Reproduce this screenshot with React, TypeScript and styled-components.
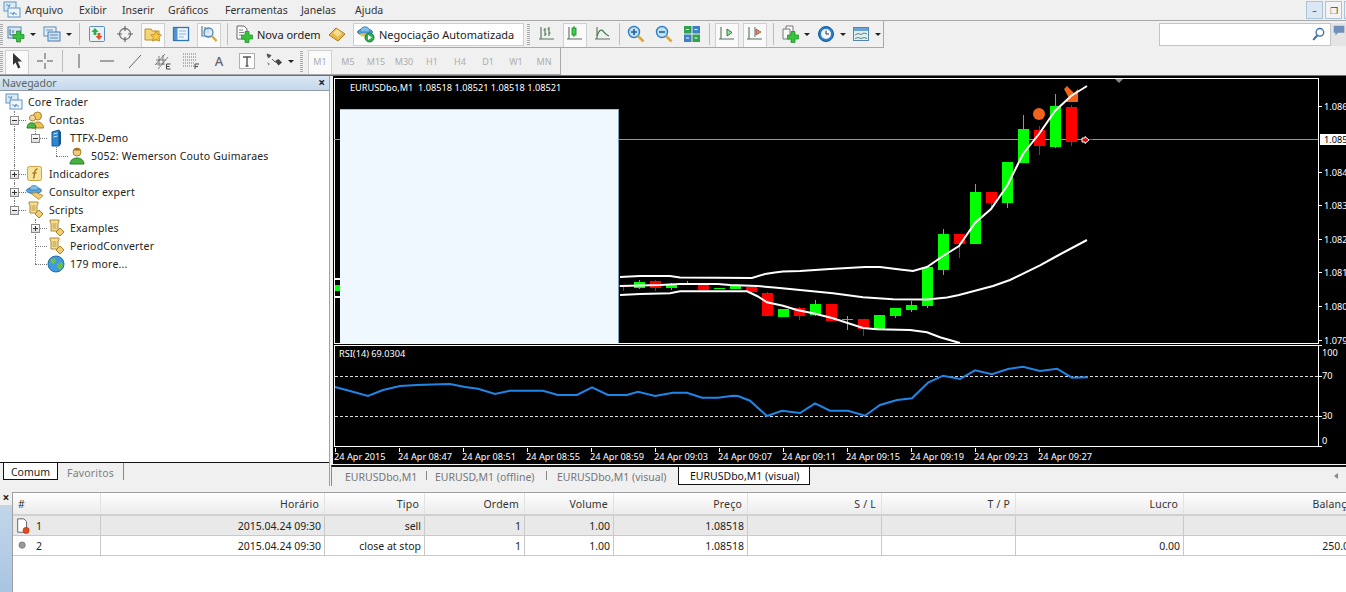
import React from "react";
import styled, { createGlobalStyle } from "styled-components";

const UI_FONT = `"Noto Sans", "Open Sans", sans-serif`;

const GlobalStyle = createGlobalStyle`
  html, body {
    margin: 0;
    padding: 0;
    overflow: hidden;
    background: #f0f0f0;
  }
  * { box-sizing: border-box; }
`;

/* ---------- icons ---------- */

const Ico = ({ s = 18, children }: { s?: number; children: React.ReactNode }) => (
  <svg width={s} height={s} viewBox="0 0 18 18" style={{ display: "block", flex: "none" }}>
    {children}
  </svg>
);

const Plus = ({ x = 12, y = 12 }: { x?: number; y?: number }) => (
  <path
    d={`M${x - 2} ${y - 5.5}h4v3.5h3.5v4H${x + 2}v3.5h-4V${y + 2}H${x - 5.5}v-4H${x - 2}z`}
    fill="#35c43a"
    stroke="#1c8a24"
    strokeWidth=".7"
  />
);

const NewChartIcon = () => (
  <Ico>
    <rect x="1" y="2" width="13" height="11" fill="#d8e8f6" stroke="#4f86b8" />
    <path d="M3 4v6M3 10h6M6 5v3" stroke="#3d6a99" fill="none" />
    <Plus x={11.5} y={11.5} />
  </Ico>
);
const ProfilesIcon = () => (
  <Ico>
    <rect x="1" y="2" width="12" height="9" fill="#e6f0fa" stroke="#5a8bbb" />
    <rect x="5" y="7" width="12" height="9" fill="#cfe1f3" stroke="#4a7cae" />
    <path d="M3 5h7M7 10h8M7 13h8" stroke="#5a8bbb" />
  </Ico>
);
const MarketIcon = () => (
  <Ico>
    <rect x="1.5" y="1.5" width="15" height="15" rx="1" fill="#e7f0f8" stroke="#5c8fbd" />
    <path d="M7 3l3.5 4H8.4v3H5.6V7H3.5z" fill="#2fae3a" />
    <path d="M11 15l-3.5-4h2.1V8h2.8v3h2.1z" fill="#e2522b" />
  </Ico>
);
const CrossIcon = () => (
  <Ico>
    <circle cx="9" cy="9" r="5.5" fill="none" stroke="#777" strokeWidth="1.3" />
    <path d="M9 1v5M9 12v5M1 9h5M12 9h5" stroke="#666" strokeWidth="1.2" />
  </Ico>
);
const NavigatorIcon = () => (
  <Ico>
    <path d="M1 4h6l1.5 2H15v9H1z" fill="#f5d77a" stroke="#b98e2c" />
    <path d="M12 6l1.7 3.4 3.8.5-2.700 2.600.7 3.700-3.500-1.800-3.400 1.800.7-3.700-2.800-2.600 3.800-.5z" fill="#f8c843" stroke="#b07f1c" strokeWidth=".7" />
  </Ico>
);
const TerminalIcon = () => (
  <Ico>
    <rect x="1.5" y="2.5" width="15" height="13" fill="#eef5fc" stroke="#2f76b5" strokeWidth="1.3" />
    <rect x="2" y="3" width="3.5" height="12" fill="#4f93cf" />
    <path d="M7 6h7M7 9h7M7 12h5" stroke="#8fb4d6" />
  </Ico>
);
const TesterIcon = () => (
  <Ico>
    <path d="M2 1v10h9M5 2v6M8 3v5" stroke="#5f7f8f" fill="none" strokeWidth="1.2" />
    <circle cx="8.5" cy="7.5" r="4.5" fill="#d6e8f6" fillOpacity=".7" stroke="#4c86b6" strokeWidth="1.3" />
    <path d="M12 11l4.5 5" stroke="#d6a73a" strokeWidth="2.4" />
  </Ico>
);
const OrderIcon = () => (
  <Ico>
    <path d="M2 1h7l3 3v10H2z" fill="#fff" stroke="#666" />
    <path d="M4 5h4M4 7.5h5M4 10h3" stroke="#888" />
    <Plus x={12} y={12} />
  </Ico>
);
const GoldIcon = () => (
  <Ico>
    <path d="M1 10l7-7 9 6-7 7z" fill="#e9b94a" stroke="#a97a1e" />
    <path d="M5 8l4-4 5 4-4 4z" fill="#f8dd90" />
  </Ico>
);
const HatIcon = () => (
  <Ico>
    <ellipse cx="8" cy="7" rx="7.5" ry="3" fill="#5ea6dc" stroke="#2d6fa5" />
    <path d="M3 7c0-7 10-7 10 0z" fill="#7cc0ea" stroke="#2d6fa5" strokeWidth=".7" />
    <path d="M3 8.5h10l-1 3H4z" fill="#e6c15a" />
    <circle cx="12.5" cy="12.5" r="4.5" fill="#2eae4d" stroke="#1b7a33" />
    <path d="M11 10l4 2.5-4 2.500z" fill="#fff" />
  </Ico>
);
const Axis = () => <path d="M3 2v12M1 14h15" stroke="#56705a" strokeWidth="1.1" fill="none" />;
const BarsIcon = () => (
  <Ico>
    <Axis />
    <path d="M7 3v8M5.5 5H7M7 9h1.5M11 2v9M9.5 4H11M11 8h1.5" stroke="#3f6b45" fill="none" />
  </Ico>
);
const CandlesIcon = () => (
  <Ico>
    <Axis />
    <path d="M8 1v11" stroke="#2f7a38" />
    <rect x="6" y="3" width="4" height="7" fill="#3bd24a" stroke="#227a2c" strokeWidth=".8" />
  </Ico>
);
const LineIcon = () => (
  <Ico>
    <Axis />
    <path d="M3 11c2-6 4-7 6-5s3 4 6 5" stroke="#3f7a45" fill="none" strokeWidth="1.2" />
  </Ico>
);
const Magnifier = ({ sign }: { sign: "+" | "-" }) => (
  <Ico>
    <circle cx="7" cy="7" r="5.5" fill="#bfe0f6" stroke="#2f7fc0" strokeWidth="1.4" />
    <path d={sign === "+" ? "M4 7h6M7 4v6" : "M4 7h6"} stroke="#1f5f9a" strokeWidth="1.6" />
    <path d="M11 11l5.5 5.5" stroke="#d9a93a" strokeWidth="2.6" />
  </Ico>
);
const TileIcon = () => (
  <Ico>
    <rect x="1" y="1" width="7.5" height="7.5" fill="#2fa34e" />
    <rect x="9.5" y="1" width="7.5" height="7.5" fill="#3f7fc4" />
    <rect x="1" y="9.5" width="7.5" height="7.5" fill="#3f7fc4" />
    <rect x="9.5" y="9.5" width="7.5" height="7.5" fill="#2fa34e" />
    <path d="M3 4.5h3M11.5 4.5h3M3 13h3M11.5 13h3" stroke="#fff" />
  </Ico>
);
const ScrollIcon = () => (
  <Ico>
    <Axis />
    <path d="M9 4l5 3.5-5 3.500z" fill="#9ae09f" stroke="#2f7a38" />
  </Ico>
);
const ShiftIcon = () => (
  <Ico>
    <Axis />
    <path d="M9 2v10" stroke="#56705a" />
    <path d="M15 7l-5-3v6z" fill="#d98a6a" stroke="#8a4a32" strokeWidth=".7" />
  </Ico>
);
const IndicatorIcon = () => (
  <Ico>
    <path d="M5 1h7v9H5z" fill="#fff" stroke="#777" />
    <path d="M2 4h7v10H2z" fill="#f7f7f7" stroke="#777" />
    <Plus x={12} y={12} />
  </Ico>
);
const ClockIcon = () => (
  <Ico>
    <circle cx="9" cy="9" r="7.5" fill="#2a7fcb" stroke="#14578f" />
    <circle cx="9" cy="9" r="5" fill="#f3f8fc" />
    <path d="M9 5.5V9h3" stroke="#333" fill="none" />
  </Ico>
);
const TemplateIcon = () => (
  <Ico>
    <rect x="1.5" y="2.5" width="15" height="13" fill="#e2eff0" stroke="#4e86b5" />
    <rect x="2" y="3" width="14" height="3" fill="#6ba4d4" />
    <path d="M3 10l3-1.5 3 1 3-1.5 3 1M3 13.5l3-1 3 1 3-1 3 1" stroke="#548a7a" fill="none" />
  </Ico>
);
const CursorIcon = () => (
  <Ico>
    <path d="M5 1l9 8.5H9.8l2.600 6-2.300 1-2.500-6L5 13z" fill="#333" />
  </Ico>
);
const ThinCrossIcon = () => (
  <Ico>
    <path d="M9 1v6M9 11v6M1 9h6M11 9h6" stroke="#555" />
  </Ico>
);
const VerticalIcon = () => (
  <Ico>
    <path d="M9 2v14" stroke="#555" />
  </Ico>
);
const HorizontalIcon = () => (
  <Ico>
    <path d="M2 9h14" stroke="#555" />
  </Ico>
);
const TrendIcon = () => (
  <Ico>
    <path d="M3 16L15 3" stroke="#666" />
  </Ico>
);
const ChannelIcon = () => (
  <Ico>
    <path d="M1 13L11 2M4 17L14 5M2 8h10M2 12h9M5 4v10M9 3v10" stroke="#666" fill="none" strokeWidth=".8" />
    <path d="M12.5 12h4M12.5 12v5h4M12.5 14.5h3" stroke="#444" fill="none" />
  </Ico>
);
const FiboIcon = () => (
  <Ico>
    <path d="M1 2h14M1 5h14M1 8h14M1 11h11M1 14h11" stroke="#777" strokeDasharray="1 1" />
    <path d="M13 12h4M13 12v5M13 14.5h3" stroke="#444" fill="none" />
  </Ico>
);
const TextBoxIcon = () => (
  <Ico>
    <rect x="1.5" y="1.5" width="15" height="15" fill="#fdfdfd" stroke="#666" strokeDasharray="1 1" />
    <path d="M5 5h8M9 5v9M7.5 14h3" stroke="#555" strokeWidth="1.4" fill="none" />
  </Ico>
);
const ArrowsIcon = () => (
  <Ico>
    <path d="M2 2l4 1.5-2.500 2.500zM7 7l3.500 3.500" fill="#555" stroke="#555" />
    <path d="M10 9l3.500-2 3.500 3.500-3.500 3z" fill="#444" />
    <path d="M2 10l3 2-1.500 1.500z" fill="#888" />
  </Ico>
);
const WindowChartIcon = () => (
  <Ico>
    <rect x="1" y="1" width="12" height="9" fill="#dcebf7" stroke="#5f95c4" />
    <rect x="5" y="7" width="12" height="9" fill="#eef5fb" stroke="#5f95c4" />
    <path d="M3 4h2l1 2 1-3M7 12h2l1 2 1-3 1 2h2" stroke="#477eb0" fill="none" strokeWidth=".8" />
  </Ico>
);
const UsersIcon = () => (
  <Ico>
    <circle cx="11.5" cy="5" r="4" fill="#f0c85e" stroke="#a8802a" />
    <path d="M6 17c0-8 11.500-8 11.500 0z" fill="#ecc04e" stroke="#a8802a" />
    <circle cx="6.5" cy="7" r="3" fill="#f4d7a0" stroke="#a8802a" />
    <path d="M1 17c0-7 9-7 9 0z" fill="#4fb648" stroke="#2c7f2a" />
  </Ico>
);
const ServerIcon = () => (
  <Ico>
    <path d="M5 3l7-2v16H5z" fill="#2f86d0" stroke="#1a5c98" />
    <path d="M12 1l2 2v12l-2 2z" fill="#16568f" />
    <path d="M6.5 5l4-1M6.5 8l4-1" stroke="#d5ecff" />
  </Ico>
);
const UserIcon = () => (
  <Ico>
    <circle cx="9" cy="5" r="4" fill="#f3c97d" stroke="#a8802a" />
    <path d="M6 3.5c1-3 5-3 6 0z" fill="#9c6a1f" />
    <path d="M2 17c0-8 14-8 14 0z" fill="#46b13f" stroke="#2b7d28" />
  </Ico>
);
const FunctionIcon = () => (
  <Ico>
    <rect x="1.5" y="1.5" width="14" height="14" rx="2" fill="#f6e39c" stroke="#c7a548" />
    <path d="M7 13c1.500 0 1-2 1.500-5S10 4 11.500 4M6.500 8h4" stroke="#a9791a" fill="none" strokeWidth="1.4" />
  </Ico>
);
const ExpertIcon = () => (
  <Ico>
    <ellipse cx="8" cy="7.5" rx="7.5" ry="3" fill="#5ea6dc" stroke="#2d6fa5" />
    <path d="M3.5 7c0-6 9-6 9 0z" fill="#7cc0ea" stroke="#2d6fa5" strokeWidth=".7" />
    <path d="M5 10.5l5-1 7 3-4 4z" fill="#efcf71" stroke="#a8802a" strokeWidth=".8" />
  </Ico>
);
const ScriptIcon = () => (
  <Ico>
    <path d="M3 1h9v2l-1 1v8H4V4L3 3z" fill="#f4df98" stroke="#ab8a35" />
    <path d="M5.5 5h4M5.5 7h4M5.5 9h4" stroke="#b99a45" />
    <path d="M13 9l4 4-4 4-4-4z" fill="#efcf71" stroke="#a8802a" />
  </Ico>
);
const GlobeIcon = () => (
  <Ico>
    <circle cx="9" cy="9" r="8" fill="#3f9be0" stroke="#1f6aaa" />
    <path d="M3 5l4-2 2 2-1 3-3 1zM10 9l5-2 1 4-3 4-2-2z" fill="#6cc04a" />
  </Ico>
);
const OpenOrderIcon = () => (
  <Ico s={16}>
    <path d="M3 1h7l3 3v12H3z" fill="#fff" stroke="#555" />
    <circle cx="12.5" cy="14" r="3.5" fill="#e3491e" stroke="#a62f10" strokeWidth=".6" />
  </Ico>
);
const ClosedOrderIcon = () => (
  <Ico s={16}>
    <circle cx="8" cy="8" r="3.5" fill="#9a9a9a" stroke="#777" />
  </Ico>
);
const SearchIcon = () => (
  <Ico s={16}>
    <circle cx="10" cy="6" r="4.3" fill="#fff" stroke="#3c6ea5" strokeWidth="1.5" />
    <path d="M7 9.5L2.5 14.5" stroke="#3c6ea5" strokeWidth="2.3" />
  </Ico>
);
const FeedbackIcon = () => (
  <Ico s={16}>
    <path d="M3 3h12v8H8l-3 3v-3H3z" fill="#6f8fbe" />
  </Ico>
);

/* ---------- top bars ---------- */

const Shell = styled.div`
  width: 1346px;
  height: 592px;
  display: flex;
  flex-direction: column;
  background: #f0f0f0;
  font-family: ${UI_FONT};
  font-size: 10.5px;
  color: #222;
  overflow: hidden;
`;

const MenuBar = styled.div`
  height: 21px;
  flex: none;
  display: flex;
  align-items: center;
  padding: 0 0 1px 3px;
  border-bottom: 1px solid #a8a8a8;
`;

const MenuList = styled.nav`
  display: flex;
  margin-left: 4px;
`;

const MenuItem = styled.span<{ $w: number }>`
  width: ${(p) => p.$w}px;
  font-size: 10.5px;
  color: #333;
`;

const WindowButtons = styled.div`
  margin-left: auto;
  display: flex;
  gap: 2px;
  width: 40px;
  overflow: hidden;
  align-self: flex-start;
  padding-top: 1px;
`;

const WindowButton = styled.div<{ $on?: boolean }>`
  width: 17px;
  height: 18px;
  flex: none;
  border: 1px solid #a9c3db;
  background: ${(p) => (p.$on ? "#dbe8f4" : "#f3f3f3")};
  display: flex;
  align-items: center;
  justify-content: center;
  color: #444;
  font-size: 9px;
  line-height: 1;
`;

const ToolRow = styled.div<{ $h: number }>`
  height: ${(p) => p.$h}px;
  flex: none;
  display: flex;
  align-items: flex-start;
`;

const Toolbar = styled.div`
  height: 100%;
  display: flex;
  align-items: center;
  border-right: 1px solid #a8a8a8;
  border-bottom: 1px solid #a8a8a8;
`;

const ToolButton = styled.div<{ $w?: number; $active?: boolean }>`
  width: ${(p) => p.$w ?? 28}px;
  height: 25px;
  flex: none;
  display: flex;
  align-items: center;
  justify-content: center;
  gap: 5px;
  position: relative;
  &::before {
    content: "";
    display: ${(p) => (p.$active ? "block" : "none")};
    position: absolute;
    left: 2px;
    right: 2px;
    top: 1px;
    bottom: 0;
    border: 1px solid #d0d0d0;
    border-bottom: 0;
    background: #fafafa;
  }
  & > * {
    position: relative;
  }
`;

const Caret = styled.i`
  width: 0;
  height: 0;
  border-left: 3px solid transparent;
  border-right: 3px solid transparent;
  border-top: 3px solid #222;
  flex: none;
`;

const Separator = styled.div<{ $w: number }>`
  width: ${(p) => p.$w}px;
  height: 22px;
  flex: none;
  display: flex;
  justify-content: center;
  &::after {
    content: "";
    width: 1px;
    background: #bdbdbd;
  }
`;

const Grip = styled.div<{ $w: number }>`
  width: ${(p) => p.$w}px;
  height: 21px;
  flex: none;
  display: flex;
  justify-content: center;
  &::after {
    content: "";
    width: 3px;
    background: repeating-linear-gradient(to bottom, #aaa 0 1px, transparent 1px 2px);
  }
`;

const LabelButton = styled.div`
  width: 92px;
  height: 25px;
  flex: none;
  display: flex;
  align-items: center;
  gap: 4px;
  padding-left: 4px;
  font-size: 11px;
  color: #222;
  white-space: nowrap;
`;

const AutoTrade = styled.div`
  width: 171px;
  height: 23px;
  margin-left: 2px;
  flex: none;
  display: flex;
  align-items: center;
  gap: 4px;
  padding-left: 3px;
  background: #fff;
  border: 1px solid #cfcfcf;
  font-size: 11px;
  white-space: nowrap;
`;

const PeriodButton = styled(ToolButton)`
  color: #adadad;
  font-size: 9px;
`;

const LetterTool = styled.span`
  font-size: 13px;
  color: #666;
  font-weight: 500;
`;

const ToolbarEnd = styled.div`
  width: 2px;
  flex: none;
`;

const SearchBox = styled.div`
  margin-left: auto;
  margin-top: 2px;
  width: 172px;
  height: 23px;
  flex: none;
  background: #fff;
  border: 1px solid #c4c4c4;
  display: flex;
  align-items: center;
  justify-content: flex-end;
  padding-right: 3px;
`;

const FeedbackSlot = styled.div`
  width: 15px;
  margin-top: 2px;
  height: 23px;
  flex: none;
  background: #e4e4e4;
  overflow: hidden;
`;

/* ---------- navigator ---------- */

const Workspace = styled.div`
  height: 411px;
  flex: none;
  display: flex;
  border-top: 1px solid #6e6e6e;
`;

const NavPanel = styled.aside`
  width: 330px;
  flex: none;
  display: flex;
  flex-direction: column;
  border-right: 1px solid #a0a0a0;
`;

const NavHeader = styled.header`
  height: 15px;
  flex: none;
  padding-left: 2px;
  padding-right: 4px;
  display: flex;
  align-items: center;
  justify-content: space-between;
  background: linear-gradient(#dbe7f3, #c5d8eb);
  border-bottom: 1px solid #8f9aa6;
  color: #566;
  font-size: 10.5px;
`;

const CloseMark = styled.span`
  font-size: 12px;
  font-weight: 700;
  line-height: 1;
  color: #222;
`;

const TreeBox = styled.div`
  height: 372px;
  flex: none;
  background: #fff;
  padding-top: 2px;
  border-bottom: 1px solid #111;
`;

const TreeRow = styled.div<{ $indent: number }>`
  height: 18px;
  display: flex;
  align-items: center;
  padding-left: ${(p) => p.$indent}px;
  position: relative;
  font-size: 10.5px;
  letter-spacing: 0.2px;
  color: #222;
  white-space: nowrap;
`;

const TreeLabel = styled.span`
  margin-left: 5px;
`;

const Guide = styled.i<{ $x: number; $half?: boolean }>`
  position: absolute;
  left: ${(p) => p.$x}px;
  top: 0;
  height: ${(p) => (p.$half ? "9px" : "18px")};
  border-left: 1px dotted #777;
`;

const BranchSlot = styled.span`
  width: 16px;
  height: 18px;
  flex: none;
  display: flex;
  align-items: center;
  position: relative;
  &::before {
    content: "";
    position: absolute;
    left: 4px;
    right: 0;
    top: 9px;
    border-top: 1px dotted #777;
  }
`;

const Expander = styled.span`
  width: 9px;
  height: 9px;
  position: relative;
  background: linear-gradient(#fff, #ddd);
  border: 1px solid #8a8a8a;
  font-size: 0;
  &::before {
    content: "";
    position: absolute;
    left: 1px;
    right: 1px;
    top: 3px;
    height: 1px;
    background: #333;
  }
  &[data-closed="true"]::after {
    content: "";
    position: absolute;
    top: 1px;
    bottom: 1px;
    left: 3px;
    width: 1px;
    background: #333;
  }
`;

const NavTabs = styled.div`
  flex: 1;
  display: flex;
  align-items: flex-start;
  padding-left: 3px;
`;

const ActiveNavTab = styled.div`
  width: 55px;
  height: 17px;
  padding-top: 1px;
  background: #fff;
  border: 1px solid #111;
  border-top: 0;
  display: flex;
  align-items: center;
  justify-content: center;
  font-size: 10.5px;
`;

const NavTab = styled.div`
  margin-left: 9px;
  width: 57px;
  height: 17px;
  padding-top: 2px;
  display: flex;
  align-items: center;
  border-right: 1px solid #888;
  color: #808080;
  font-size: 10.5px;
  letter-spacing: 0.2px;
`;

/* ---------- charts ---------- */

const ChartColumn = styled.div`
  flex: 1;
  min-width: 0;
  display: flex;
  flex-direction: column;
  padding-left: 3px;
`;

const ChartArea = styled.div`
  height: 388px;
  flex: none;
  background: #000;
  color: #fff;
  font-size: 9.2px;
  padding-top: 2px;
  overflow: hidden;
`;

const Pane = styled.div<{ $h: number }>`
  height: ${(p) => p.$h}px;
  position: relative;
  & > svg {
    display: block;
  }
  text {
    font-family: ${UI_FONT};
    font-size: 9.2px;
    fill: #fff;
  }
`;

const PaneGap = styled.div`
  height: 1px;
`;

const Legend = styled.div<{ $x: number; $y: number }>`
  position: absolute;
  left: ${(p) => p.$x}px;
  top: ${(p) => p.$y}px;
  font-size: 9.2px;
  line-height: 12px;
  color: #fff;
  white-space: pre;
`;

const Blank = styled.div`
  position: absolute;
  left: 7px;
  top: 31px;
  width: 279px;
  bottom: 1px;
  background: #f0f8ff;
  border-right: 1px solid #7f9db5;
  border-top: 1px solid #a9c0d2;
`;

const TimeAxis = styled.div`
  display: flex;
  padding-left: 1px;
  height: 16px;
`;

const TimeLabel = styled.span`
  width: 64px;
  flex: none;
  position: relative;
  padding-top: 3px;
  line-height: 12px;
  white-space: nowrap;
  &::before {
    content: "";
    position: absolute;
    left: 1px;
    top: 0;
    height: 4px;
    border-left: 1px solid #fff;
  }
`;

const TabBar = styled.div`
  flex: 1;
  margin-left: -2px;
  margin-top: 1px;
  display: flex;
  align-items: stretch;
  padding-bottom: 1px;
  border-top: 2px solid #111;
  border-left: 1px solid #8a8a8a;
  position: relative;
`;

const ChartTab = styled.div<{ $w: number; $pad: number; $active?: boolean; $sep?: boolean }>`
  width: ${(p) => p.$w}px;
  flex: none;
  display: flex;
  align-items: center;
  padding: 1px 0 0 ${(p) => p.$pad}px;
  font-size: 10.5px;
  white-space: nowrap;
  color: ${(p) => (p.$active ? "#111" : "#777")};
  background: ${(p) => (p.$active ? "#fff" : "transparent")};
  border: ${(p) => (p.$active ? "1px solid #111" : "0")};
  border-top: 0;
  position: relative;
  &::after {
    content: "";
    display: ${(p) => (p.$sep ? "block" : "none")};
    position: absolute;
    right: 0;
    top: 4px;
    bottom: 5px;
    border-right: 1px solid #888;
  }
`;

const TabScroll = styled.div`
  margin-left: auto;
  width: 20px;
  display: flex;
  align-items: center;
  justify-content: center;
  &::before {
    content: "";
    border-top: 3px solid transparent;
    border-bottom: 3px solid transparent;
    border-right: 4px solid #888;
  }
`;

/* ---------- terminal ---------- */

const Terminal = styled.section`
  flex: 1;
  display: flex;
  min-height: 0;
  padding-top: 6px;
`;

const TerminalSide = styled.div`
  width: 12px;
  flex: none;
  display: flex;
  flex-direction: column;
  align-items: center;
`;

const SideStrip = styled.div`
  flex: 1;
  margin-top: 1px;
  width: 100%;
  background: linear-gradient(#c3d6ea, #a9c5e3);
`;

const Table = styled.div`
  flex: 1;
  min-width: 0;
  background: #fff;
  border-top: 1px solid #a0a0a0;
  border-left: 1px solid #a0a0a0;
  overflow: hidden;
`;

const COLUMNS = "88px 224px 100px 100px 89px 134px 134px 134px 168px 175px";

const HeadRow = styled.div`
  display: grid;
  grid-template-columns: ${COLUMNS};
  height: 23px;
  background: linear-gradient(#fff, #f3f3f3 60%, #ececec);
  border-bottom: 2px solid #d0d0d0;
`;

const HeadCell = styled.div<{ $left?: boolean }>`
  display: flex;
  align-items: center;
  justify-content: ${(p) => (p.$left ? "flex-start" : "flex-end")};
  padding: 0 5px;
  border-right: 1px solid #e2e2e2;
  font-size: 10.5px;
  letter-spacing: 0.2px;
  color: #333;
`;

const DataRow = styled.div<{ $shade?: boolean }>`
  display: grid;
  grid-template-columns: ${COLUMNS};
  height: 20px;
  background: ${(p) => (p.$shade ? "#e9e9e9" : "#fff")};
  border-bottom: 1px solid #c9c9c9;
`;

const DataCell = styled.div`
  display: flex;
  align-items: center;
  justify-content: flex-end;
  padding: 0 3px;
  border-right: 1px solid #c9c9c9;
  font-size: 10.5px;
  color: #222;
  white-space: nowrap;
`;

const IdCell = styled(DataCell)`
  justify-content: flex-start;
  gap: 5px;
  padding-left: 2px;
`;

/* ---------- chart data ---------- */

// x, body top, body bottom, wick top, wick bottom, is up
type Candle = [number, number, number, number, number, boolean];

const CANDLES: Candle[] = [
  [335, 285, 291, 285, 291, true],
  [623, 285, 287, 285, 291, false],
  [639, 282, 288, 280, 289, true],
  [655, 281, 288, 280, 291, false],
  [671, 285, 288, 283, 290, true],
  [687, 283, 284, 281, 285, true],
  [703, 285, 290, 284, 290, false],
  [719, 288, 289, 288, 289, true],
  [735, 286, 289, 285, 289, true],
  [751, 287, 292, 286, 294, false],
  [767, 293, 316, 292, 316, false],
  [783, 309, 317, 309, 317, true],
  [799, 308, 316, 307, 320, false],
  [815, 304, 315, 300, 316, true],
  [831, 304, 321, 304, 321, false],
  [847, 319, 320, 316, 330, true],
  [863, 319, 329, 319, 336, false],
  [879, 315, 329, 315, 330, true],
  [895, 308, 316, 308, 318, true],
  [911, 305, 310, 301, 312, true],
  [927, 267, 306, 267, 308, true],
  [943, 234, 270, 229, 275, true],
  [959, 234, 244, 234, 258, false],
  [975, 192, 244, 184, 244, true],
  [991, 192, 203, 192, 207, false],
  [1007, 162, 203, 162, 208, true],
  [1023, 129, 163, 115, 163, true],
  [1039, 130, 146, 126, 155, false],
  [1055, 106, 147, 94, 148, true],
  [1071, 107, 142, 105, 146, false],
];

const UPPER =
  "620,277 640,276 670,276 680,277.5 752,278 765,274 775,272.5 783,271.5 800,271 830,269 865,267 880,267 900,269.5 913,271 927,267 943,256 959,246 975,223 991,209 1007,186 1023,154 1039,134 1055,111 1071,96 1087,86";
const MIDDLE =
  "620,286 660,285 680,284 718,284 730,285 757,286 777,287.7 800,290 833,293.3 863,297.3 893,299.3 927,299.5 947,297.5 959,295 993,286 1010,280 1040,265.3 1057,256 1087,240";
const LOWER =
  "620,295 640,294 670,293.3 680,291.3 747,291.3 757,296 767,302.3 783,305.7 797,310 813,313.3 833,318.3 863,328 877,329.3 910,330 927,332.3 940,337.3 960,343";

const RSI = [
  [335, 387], [350, 391], [368, 396], [383, 390], [400, 386], [417, 385], [440, 384.3], [450, 384], [465, 387],
  [478, 388.7], [495, 394], [510, 390.7], [543, 390.7], [558, 395], [577, 395], [592, 387.3], [608, 395],
  [627, 395], [638, 391.7], [655, 396], [673, 392.7], [687, 392.7], [702, 397.7], [718, 397.7], [733, 395.7],
  [738, 396], [750, 400.7], [767, 416], [782, 410.7], [800, 413], [815, 403.3], [830, 410.7], [848, 410.7],
  [865, 415.7], [880, 405], [897, 400], [912, 398.3], [928, 382.7], [943, 375.7], [960, 379], [975, 370.3],
  [992, 374.3], [1008, 369], [1023, 366.7], [1040, 371], [1057, 368.7], [1072, 377.7], [1088, 377.3],
]
  .map((p) => p.join(","))
  .join(" ");

const PRICES: [string, number][] = [
  ["1.08600", 106],
  ["1.08400", 172],
  ["1.08300", 205],
  ["1.08200", 239],
  ["1.08100", 272],
  ["1.08000", 306],
  ["1.07900", 340],
];

const TIMES = [
  "24 Apr 2015", "24 Apr 08:47", "24 Apr 08:51", "24 Apr 08:55", "24 Apr 08:59", "24 Apr 09:03",
  "24 Apr 09:07", "24 Apr 09:11", "24 Apr 09:15", "24 Apr 09:19", "24 Apr 09:23", "24 Apr 09:27",
];

const MainChart = () => (
  <svg width={1013} height={267} viewBox="333 78 1013 267">
    <rect x="334.5" y="78.5" width="984" height="265" fill="none" stroke="#fff" />
    <path d="M334 139.5H1318" stroke="#999" />
    {CANDLES.map(([x, top, bottom, wt, wb, up]) => {
      const color = up ? "#00ff00" : "#ff0000";
      const left = x === 335 ? 335 : x - 5;
      return (
        <g key={x}>
          <path d={`M${x + 0.5} ${wt}V${wb}`} stroke={color} />
          <rect x={left} y={top} width={x === 335 ? 5 : 11} height={bottom - top} fill={color} />
        </g>
      );
    })}
    <path d="M1087 139.5h6" stroke="#00c000" />
    <circle cx="1039" cy="114" r="6" fill="#f2641c" />
    <path d="M1064 89l3-3 7 7 4-4v13h-13l4-4z" fill="#f2641c" />
    <polyline points="335,279 341,279" stroke="#fff" strokeWidth="2" fill="none" />
    <polyline points="335,297 341,297" stroke="#fff" strokeWidth="2" fill="none" />
    <polyline points={UPPER} stroke="#fff" strokeWidth="2" fill="none" />
    <polyline points={MIDDLE} stroke="#fff" strokeWidth="2" fill="none" />
    <polyline points={LOWER} stroke="#fff" strokeWidth="2" fill="none" />
    <path d="M1082 138h3v-1.500l4 3.500-4 3.500V142h-3z" fill="#e00010" stroke="#fff" />
    <path d="M1115 79h8l-4 4z" fill="#888" />
    {PRICES.map(([p, y]) => (
      <g key={p}>
        <path d={`M1319 ${y + 0.5}h3`} stroke="#fff" />
        <text x="1324" y={y + 3.5}>
          {p}
        </text>
      </g>
    ))}
    <rect x="1320" y="134" width="26" height="11" fill="#fff" />
    <text x="1324" y="143" style={{ fill: "#000" }}>
      1.08518
    </text>
  </svg>
);

const RsiChart = () => (
  <svg width={1013} height={103} viewBox="333 345 1013 103">
    <rect x="334.5" y="345.5" width="984" height="101" fill="none" stroke="#fff" />
    <path d="M335 376.5H1318M335 416.5H1318" stroke="#ddd" strokeDasharray="3 2" />
    <polyline points={RSI} stroke="#1f86e8" strokeWidth="2" fill="none" />
    <path d="M1319 345.5h3M1319 376.5h3M1319 416.5h3M1319 446.5h3" stroke="#fff" />
    <text x="1322" y="356">100</text>
    <text x="1322" y="379">70</text>
    <text x="1322" y="419">30</text>
    <text x="1322" y="444">0</text>
  </svg>
);

/* ---------- page ---------- */

const MENU: [string, number][] = [
  ["Arquivo", 54],
  ["Exibir", 43],
  ["Inserir", 46],
  ["Gráficos", 57],
  ["Ferramentas", 76],
  ["Janelas", 54],
  ["Ajuda", 50],
];

const TIMEFRAMES = ["M1", "M5", "M15", "M30", "H1", "H4", "D1", "W1", "MN"];

const HEAD = ["Horário", "Tipo", "Ordem", "Volume", "Preço", "S / L", "T / P", "Lucro", "Balanço"];

const ROWS = [
  { id: 1, icon: <OpenOrderIcon />, cells: ["2015.04.24 09:30", "sell", "1", "1.00", "1.08518", "", "", "", ""] },
  { id: 2, icon: <ClosedOrderIcon />, cells: ["2015.04.24 09:30", "close at stop", "1", "1.00", "1.08518", "", "", "0.00", "250.00"] },
];

export default function App() {
  return (
    <Shell>
      <GlobalStyle />
      <MenuBar>
        <WindowChartIcon />
        <MenuList>
          {MENU.map(([m, w]) => (
            <MenuItem key={m} $w={w}>
              {m}
            </MenuItem>
          ))}
        </MenuList>
        <WindowButtons>
          <WindowButton $on>–</WindowButton>
          <WindowButton>❐</WindowButton>
          <WindowButton>×</WindowButton>
        </WindowButtons>
      </MenuBar>

      <ToolRow $h={27}>
        <Toolbar>
          <Grip $w={3} />
          <ToolButton $w={36}><NewChartIcon /><Caret /></ToolButton>
          <ToolButton $w={36}><ProfilesIcon /><Caret /></ToolButton>
          <Separator $w={8} />
          <ToolButton><MarketIcon /></ToolButton>
          <ToolButton><CrossIcon /></ToolButton>
          <ToolButton $active><NavigatorIcon /></ToolButton>
          <ToolButton><TerminalIcon /></ToolButton>
          <ToolButton $active><TesterIcon /></ToolButton>
          <Separator $w={8} />
          <LabelButton><OrderIcon />Nova ordem</LabelButton>
          <ToolButton><GoldIcon /></ToolButton>
          <AutoTrade><HatIcon />Negociação Automatizada</AutoTrade>
          <Grip $w={9} />
          <ToolButton><BarsIcon /></ToolButton>
          <ToolButton $active><CandlesIcon /></ToolButton>
          <ToolButton><LineIcon /></ToolButton>
          <Separator $w={5} />
          <ToolButton><Magnifier sign="+" /></ToolButton>
          <ToolButton><Magnifier sign="-" /></ToolButton>
          <ToolButton><TileIcon /></ToolButton>
          <Separator $w={7} />
          <ToolButton $active><ScrollIcon /></ToolButton>
          <ToolButton $active><ShiftIcon /></ToolButton>
          <Separator $w={8} />
          <ToolButton $w={36}><IndicatorIcon /><Caret /></ToolButton>
          <ToolButton $w={36}><ClockIcon /><Caret /></ToolButton>
          <ToolButton $w={34}><TemplateIcon /><Caret /></ToolButton>
        </Toolbar>
        <SearchBox><SearchIcon /></SearchBox>
        <FeedbackSlot><FeedbackIcon /></FeedbackSlot>
      </ToolRow>

      <ToolRow $h={27}>
        <Toolbar>
          <Grip $w={3} />
          <ToolButton $active><CursorIcon /></ToolButton>
          <ToolButton><ThinCrossIcon /></ToolButton>
          <Separator $w={6} />
          <ToolButton><VerticalIcon /></ToolButton>
          <ToolButton><HorizontalIcon /></ToolButton>
          <ToolButton><TrendIcon /></ToolButton>
          <ToolButton><ChannelIcon /></ToolButton>
          <ToolButton><FiboIcon /></ToolButton>
          <ToolButton><LetterTool>A</LetterTool></ToolButton>
          <ToolButton><TextBoxIcon /></ToolButton>
          <ToolButton $w={36}><ArrowsIcon /><Caret /></ToolButton>
          <Grip $w={9} />
          {TIMEFRAMES.map((t, i) => (
            <PeriodButton key={t} $active={i === 0}>
              <span>{t}</span>
            </PeriodButton>
          ))}
          <ToolbarEnd />
        </Toolbar>
      </ToolRow>

      <Workspace>
        <NavPanel>
          <NavHeader>
            Navegador
            <CloseMark>×</CloseMark>
          </NavHeader>
          <TreeBox>
            <TreeRow $indent={5}>
              <WindowChartIcon />
              <TreeLabel>Core Trader</TreeLabel>
            </TreeRow>
            <TreeRow $indent={10}>
              <Guide $x={14} />
              <BranchSlot><Expander /></BranchSlot>
              <UsersIcon />
              <TreeLabel>Contas</TreeLabel>
            </TreeRow>
            <TreeRow $indent={31}>
              <Guide $x={14} />
              <Guide $x={35} $half />
              <BranchSlot><Expander /></BranchSlot>
              <ServerIcon />
              <TreeLabel>TTFX-Demo</TreeLabel>
            </TreeRow>
            <TreeRow $indent={52}>
              <Guide $x={14} />
              <Guide $x={56} $half />
              <BranchSlot />
              <UserIcon />
              <TreeLabel>5052: Wemerson Couto Guimaraes</TreeLabel>
            </TreeRow>
            <TreeRow $indent={10}>
              <Guide $x={14} />
              <BranchSlot><Expander data-closed="true" /></BranchSlot>
              <FunctionIcon />
              <TreeLabel>Indicadores</TreeLabel>
            </TreeRow>
            <TreeRow $indent={10}>
              <Guide $x={14} />
              <BranchSlot><Expander data-closed="true" /></BranchSlot>
              <ExpertIcon />
              <TreeLabel>Consultor expert</TreeLabel>
            </TreeRow>
            <TreeRow $indent={10}>
              <Guide $x={14} $half />
              <BranchSlot><Expander /></BranchSlot>
              <ScriptIcon />
              <TreeLabel>Scripts</TreeLabel>
            </TreeRow>
            <TreeRow $indent={31}>
              <Guide $x={35} />
              <BranchSlot><Expander data-closed="true" /></BranchSlot>
              <ScriptIcon />
              <TreeLabel>Examples</TreeLabel>
            </TreeRow>
            <TreeRow $indent={31}>
              <Guide $x={35} />
              <BranchSlot />
              <ScriptIcon />
              <TreeLabel>PeriodConverter</TreeLabel>
            </TreeRow>
            <TreeRow $indent={31}>
              <Guide $x={35} $half />
              <BranchSlot />
              <GlobeIcon />
              <TreeLabel>179 more...</TreeLabel>
            </TreeRow>
          </TreeBox>
          <NavTabs>
            <ActiveNavTab>Comum</ActiveNavTab>
            <NavTab>Favoritos</NavTab>
          </NavTabs>
        </NavPanel>

        <ChartColumn>
          <ChartArea>
            <Pane $h={266}>
              <MainChart />
              <Legend $x={17} $y={4}>EURUSDbo,M1  1.08518 1.08521 1.08518 1.08521</Legend>
              <Blank />
            </Pane>
            <PaneGap />
            <Pane $h={103}>
              <RsiChart />
              <Legend $x={6} $y={3}>RSI(14) 69.0304</Legend>
            </Pane>
            <TimeAxis>
              {TIMES.map((t) => (
                <TimeLabel key={t}>{t}</TimeLabel>
              ))}
            </TimeAxis>
          </ChartArea>
          <TabBar>
            <ChartTab $w={95} $pad={13} $sep>EURUSDbo,M1</ChartTab>
            <ChartTab $w={120} $pad={8} $sep>EURUSD,M1 (offline)</ChartTab>
            <ChartTab $w={131} $pad={10}>EURUSDbo,M1 (visual)</ChartTab>
            <ChartTab $w={132} $pad={11} $active>EURUSDbo,M1 (visual)</ChartTab>
            <TabScroll />
          </TabBar>
        </ChartColumn>
      </Workspace>

      <Terminal>
        <TerminalSide>
          <CloseMark>×</CloseMark>
          <SideStrip />
        </TerminalSide>
        <Table>
          <HeadRow>
            <HeadCell $left>#</HeadCell>
            {HEAD.map((h) => (
              <HeadCell key={h}>{h}</HeadCell>
            ))}
          </HeadRow>
          {ROWS.map((r) => (
            <DataRow key={r.id} $shade={r.id === 1}>
              <IdCell>
                {r.icon}
                {r.id}
              </IdCell>
              {r.cells.map((c, i) => (
                <DataCell key={i}>{c}</DataCell>
              ))}
            </DataRow>
          ))}
        </Table>
      </Terminal>
    </Shell>
  );
}
